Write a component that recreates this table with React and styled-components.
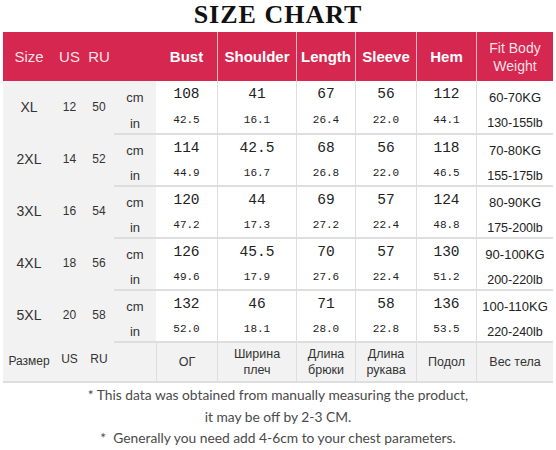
import React from "react";
import styled, { createGlobalStyle } from "styled-components";

const GlobalStyle = createGlobalStyle`
  html, body { margin: 0; padding: 0; background: #ffffff; }
  body { font-family: "Liberation Sans", Arial, sans-serif; color: #333; }
  * { box-sizing: border-box; }
`;

const COLS = "52px 29px 30px 42px 61px 79px 59px 61px 60px 77px";
const GRAY = "#f2f2f2";
const LINE = "#dedede";

const Page = styled.div`
  width: 556px;
  height: 450px;
  background: #fff;
`;

const Title = styled.h1`
  margin: 0;
  height: 32px;
  line-height: 30px;
  text-align: center;
  font-family: "Liberation Serif", "Times New Roman", serif;
  font-weight: bold;
  font-size: 26px;
  letter-spacing: 1px;
  color: #111;
`;

const Table = styled.div`
  width: 550px;
  margin: 0 3px;
`;

const HeaderRow = styled.div`
  display: grid;
  grid-template-columns: ${COLS};
  height: 49px;
  background: #d62750;
`;

const HeadCell = styled.div`
  display: flex;
  align-items: center;
  justify-content: center;
  text-align: center;
  color: ${(p) => (p.$bold ? "#ffffff" : "rgba(255,255,255,0.88)")};
  font-family: "Liberation Sans", Arial, sans-serif;
  font-weight: ${(p) => (p.$bold ? 700 : 400)};
  font-size: ${(p) => (p.$small ? "14px" : "15px")};
  line-height: 18px;
  border-left: ${(p) => (p.$line ? "1px solid #e9b9c5" : "none")};
  padding-top: ${(p) => (p.$small ? "1px" : "0")};
`;

const BodyRow = styled.div`
  display: grid;
  grid-template-columns: ${COLS};
  height: 52px;
`;

const GroupCell = styled.div`
  display: flex;
  align-items: center;
  justify-content: center;
  background: ${GRAY};
  font-family: "Liberation Sans", Arial, sans-serif;
  font-size: ${(p) => (p.$big ? "14px" : "12px")};
  color: #333;
`;

const StackCell = styled.div`
  display: flex;
  flex-direction: column;
  background: ${(p) => (p.$gray ? GRAY : "#ffffff")};
  border-top: ${(p) => (p.$top ? `2px solid ${LINE}` : "none")};
  border-left: ${(p) => (p.$line ? `1px solid ${LINE}` : "none")};
`;

const Half = styled.div`
  flex: 1;
  display: flex;
  align-items: center;
  justify-content: center;
  padding-top: ${(p) => (p.$shift ? "6px" : "0")};
  white-space: nowrap;
  color: #222;
`;

const UnitText = styled.span`
  font-family: "Liberation Sans", Arial, sans-serif;
  font-size: 13px;
  color: #333;
`;

const CmValue = styled.span`
  font-family: "Liberation Mono", "Courier New", monospace;
  font-size: 14.5px;
  color: #222;
`;

const InValue = styled.span`
  font-family: "Liberation Mono", "Courier New", monospace;
  font-size: 11px;
  color: #222;
`;

const WeightText = styled.span`
  font-family: "Liberation Sans", Arial, sans-serif;
  font-size: ${(p) => (p.$lb ? "12.5px" : "13px")};
  color: #222;
`;

const FooterRow = styled.div`
  display: grid;
  grid-template-columns: ${COLS};
  height: 42px;
  background: ${GRAY};
  border-bottom: 2px solid ${LINE};
`;

const FootCell = styled.div`
  display: flex;
  align-items: center;
  justify-content: center;
  text-align: center;
  font-family: "Liberation Sans", Arial, sans-serif;
  font-size: ${(p) => (p.$tiny ? "12px" : "12.5px")};
  line-height: 16px;
  color: #333;
  border-top: ${(p) => (p.$top ? `2px solid ${LINE}` : "none")};
  border-left: ${(p) => (p.$line ? `1px solid ${LINE}` : "none")};
  padding-bottom: ${(p) => (p.$lift ? "4px" : "0")};
`;

const Notes = styled.div`
  padding-top: 1px;
  text-align: center;
  font-family: Lato, "Liberation Sans", sans-serif;
  font-size: 13.8px;
  line-height: 21.5px;
  color: #4a4a4a;
`;

const rows = [
  { size: "XL", us: "12", ru: "50", cm: ["108", "41", "67", "56", "112"], inch: ["42.5", "16.1", "26.4", "22.0", "44.1"], kg: "60-70KG", lb: "130-155lb" },
  { size: "2XL", us: "14", ru: "52", cm: ["114", "42.5", "68", "56", "118"], inch: ["44.9", "16.7", "26.8", "22.0", "46.5"], kg: "70-80KG", lb: "155-175lb" },
  { size: "3XL", us: "16", ru: "54", cm: ["120", "44", "69", "57", "124"], inch: ["47.2", "17.3", "27.2", "22.4", "48.8"], kg: "80-90KG", lb: "175-200lb" },
  { size: "4XL", us: "18", ru: "56", cm: ["126", "45.5", "70", "57", "130"], inch: ["49.6", "17.9", "27.6", "22.4", "51.2"], kg: "90-100KG", lb: "200-220lb" },
  { size: "5XL", us: "20", ru: "58", cm: ["132", "46", "71", "58", "136"], inch: ["52.0", "18.1", "28.0", "22.8", "53.5"], kg: "100-110KG", lb: "220-240lb" },
];

const headers = ["Bust", "Shoulder", "Length", "Sleeve", "Hem"];
const footLabels = [["ОГ"], ["Ширина", "плеч"], ["Длина", "брюки"], ["Длина", "рукава"], ["Подол"], ["Вес тела"]];

export default function App() {
  return (
    <Page>
      <GlobalStyle />
      <Title>SIZE CHART</Title>
      <Table>
        <HeaderRow>
          <HeadCell>Size</HeadCell>
          <HeadCell>US</HeadCell>
          <HeadCell>RU</HeadCell>
          <HeadCell />
          {headers.map((h, i) => (
            <HeadCell key={h} $bold $line={i > 0}>
              {h}
            </HeadCell>
          ))}
          <HeadCell $line $small>
            Fit Body
            <br />
            Weight
          </HeadCell>
        </HeaderRow>
        {rows.map((r, ri) => (
          <BodyRow key={r.size}>
            <GroupCell $big>{r.size}</GroupCell>
            <GroupCell>{r.us}</GroupCell>
            <GroupCell>{r.ru}</GroupCell>
            <StackCell $gray $top={ri > 0}>
              <Half $shift>
                <UnitText>cm</UnitText>
              </Half>
              <Half $shift>
                <UnitText>in</UnitText>
              </Half>
            </StackCell>
            {r.cm.map((v, i) => (
              <StackCell key={i} $top={ri > 0} $line={i > 0}>
                <Half>
                  <CmValue>{v}</CmValue>
                </Half>
                <Half>
                  <InValue>{r.inch[i]}</InValue>
                </Half>
              </StackCell>
            ))}
            <StackCell $top={ri > 0} $line>
              <Half $shift>
                <WeightText>{r.kg}</WeightText>
              </Half>
              <Half $shift>
                <WeightText $lb>{r.lb}</WeightText>
              </Half>
            </StackCell>
          </BodyRow>
        ))}
        <FooterRow>
          <FootCell $tiny>Размер</FootCell>
          <FootCell $tiny $lift>US</FootCell>
          <FootCell $tiny $lift>RU</FootCell>
          <FootCell $top />
          {footLabels.map((l, i) => (
            <FootCell key={i} $top $line>
              {l.map((t, j) => (
                <React.Fragment key={j}>
                  {j > 0 && <br />}
                  {t}
                </React.Fragment>
              ))}
            </FootCell>
          ))}
        </FooterRow>
      </Table>
      <Notes>
        * This data was obtained from manually measuring the product,
        <br />
        it may be off by 2-3 CM.
        <br />
        *&nbsp; Generally you need add 4-6cm to your chest parameters.
      </Notes>
    </Page>
  );
}
